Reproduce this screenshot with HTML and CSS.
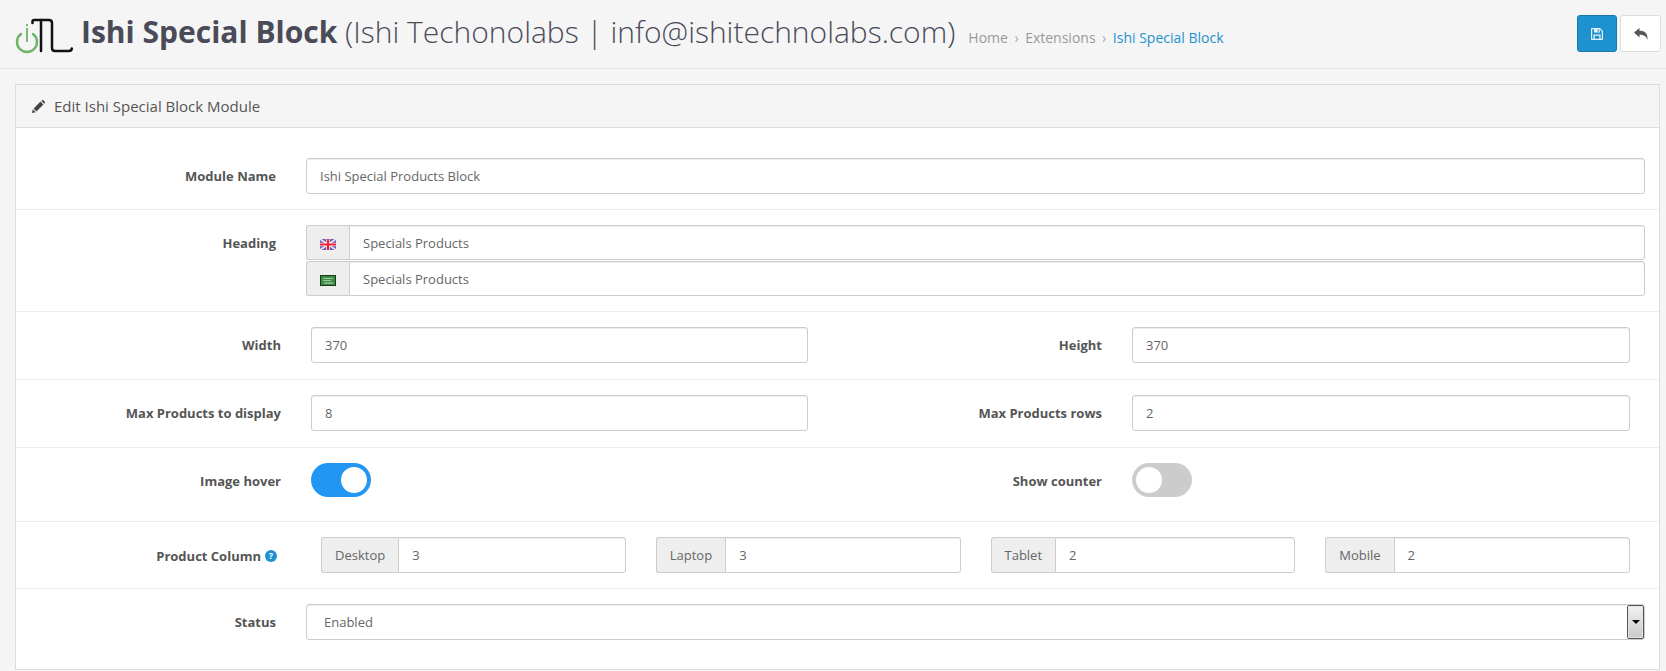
FILE: index.html
```html
<!DOCTYPE html>
<html lang="en">
<head>
<meta charset="utf-8">
<title>Ishi Special Block</title>
<link rel="stylesheet" href="styles.css">
</head>
<body>
<header class="page-header">
  <svg class="logo" width="58" height="38" viewBox="0 0 58 38" aria-hidden="true">
    <path d="M6 17 A10 10 0 1 0 18 17" fill="none" stroke="#6cb466" stroke-width="2.400" stroke-linecap="round"/>
    <rect x="11.100" y="7" width="1.800" height="2.200" fill="#6cb466"/>
    <rect x="11.100" y="11" width="1.800" height="14" fill="#6cb466"/>
    <path d="M17.500 6 V4.500 Q17.500 3 19 3 H34 Q37 3 37 6 V31 Q37 34 40 34 H54 Q56.500 34 56.800 31.500" fill="none" stroke="#111" stroke-width="2.500" stroke-linecap="round"/>
    <path d="M26 3 V34" fill="none" stroke="#111" stroke-width="2.500" stroke-linecap="round"/>
  </svg>
  <h1 class="title"><b>Ishi Special Block</b> <span class="title-light">(Ishi Techonolabs | info@ishitechnolabs.com)</span></h1>
  <ul class="breadcrumb">
    <li><a href="#">Home</a></li>
    <li class="sep">›</li>
    <li><a href="#">Extensions</a></li>
    <li class="sep">›</li>
    <li><a class="current" href="#">Ishi Special Block</a></li>
  </ul>
  <div class="actions">
    <button class="btn btn-primary" type="button" aria-label="Save">
      <svg width="12" height="12" viewBox="0 0 12 12"><path fill-rule="evenodd" d="M1 0H9L12 3V11a1 1 0 0 1-1 1H1a1 1 0 0 1-1-1V1a1 1 0 0 1 1-1ZM1.200 1.200V10.800H2.500V6.500H9.500V10.800H10.800V3.500L8.800 1.300V4.500H3V1.200ZM3.800 7.700V10.800H8.300V7.700ZM6.500 1.500V3.600H7.800V1.500Z" fill="#e6f3fb"/></svg>
    </button>
    <button class="btn btn-default" type="button" aria-label="Back">
      <svg width="14" height="12" viewBox="0 0 14 12"><path d="M0 4.500 5.500 0V2.700C10.500 2.700 14 4.800 13.400 12 12.500 8.300 10 6.700 5.500 6.700V9.500Z" fill="#555"/></svg>
    </button>
  </div>
</header>

<main class="panel">
  <div class="panel-heading">
    <svg width="13" height="13" viewBox="0 0 13 13" aria-hidden="true"><path d="M0 13 .8 9.300 3.700 12.200ZM1.600 8.500 8.500 1.600 11.400 4.500 4.500 11.400ZM9.300.8 10 .2a1 1 0 0 1 1.300 0L12.800 1.700a1 1 0 0 1 0 1.300L12.200 3.700Z" fill="#444"/></svg>
    <span>Edit Ishi Special Block Module</span>
  </div>
  <form class="panel-body">
    <div class="row row-full row-first">
      <label class="label">Module Name</label>
      <div class="field"><input class="input" type="text" value="Ishi Special Products Block"></div>
    </div>
    <div class="row row-full">
      <label class="label">Heading</label>
      <div class="field stack">
        <div class="group">
          <span class="addon addon-flag">
            <svg width="16" height="11" viewBox="0 0 16 11"><rect width="16" height="11" fill="#5f66c9"/><path d="M0 0 16 11M16 0 0 11" stroke="#f5dede" stroke-width="1.800"/><path d="M8 0V11M0 5.500H16" stroke="#fbe4e4" stroke-width="3.400"/><path d="M8 0V11M0 5.500H16" stroke="#f0233a" stroke-width="2"/></svg>
          </span>
          <input class="input input-grouped" type="text" value="Specials Products">
        </div>
        <div class="group">
          <span class="addon addon-flag">
            <svg width="16" height="11" viewBox="0 0 16 11"><rect width="16" height="11" fill="#123a18"/><rect x="1" y="1" width="14" height="9" fill="#3f8b45"/><path d="M3 3.500H13M3 5.500H11" stroke="#9cc79c" stroke-width="1"/><path d="M4 8H13" stroke="#d8ead8" stroke-width=".8"/></svg>
          </span>
          <input class="input input-grouped" type="text" value="Specials Products">
        </div>
      </div>
    </div>
    <div class="row row-half">
      <label class="label">Width</label>
      <div class="half"><input class="input" type="text" value="370"></div>
      <label class="label label-right">Height</label>
      <div class="half"><input class="input" type="text" value="370"></div>
    </div>
    <div class="row row-half">
      <label class="label">Max Products to display</label>
      <div class="half"><input class="input" type="text" value="8"></div>
      <label class="label label-right">Max Products rows</label>
      <div class="half"><input class="input" type="text" value="2"></div>
    </div>
    <div class="row row-half row-toggle">
      <label class="label">Image hover</label>
      <div class="half"><span class="switch switch-on"><span class="knob"></span></span></div>
      <label class="label label-right">Show counter</label>
      <div class="half"><span class="switch"><span class="knob"></span></span></div>
    </div>
    <div class="row row-columns">
      <label class="label label-help">Product Column <span class="help">?</span></label>
      <div class="columns">
        <div class="group"><span class="addon">Desktop</span><input class="input input-grouped" type="text" value="3"></div>
        <div class="group"><span class="addon">Laptop</span><input class="input input-grouped" type="text" value="3"></div>
        <div class="group"><span class="addon">Tablet</span><input class="input input-grouped" type="text" value="2"></div>
        <div class="group"><span class="addon">Mobile</span><input class="input input-grouped" type="text" value="2"></div>
      </div>
    </div>
    <div class="row row-full row-last">
      <label class="label">Status</label>
      <div class="field select-wrap">
        <select class="input select"><option>Enabled</option><option>Disabled</option></select>
        <span class="select-btn"><span class="select-arrow"></span></span>
      </div>
    </div>
  </form>
</main>
</body>
</html>
```
FILE: styles.css
```css
* { box-sizing: border-box; }
html, body { margin: 0; height: 100%; overflow: hidden; }
body {
  background: #f5f5f5;
  font-family: "Open Sans", sans-serif;
  font-size: 13px;
  color: #666;
}
.page-header {
  height: 69px;
  border-bottom: 1px solid #e6e6e6;
  display: flex;
  align-items: flex-start;
  padding: 0 5px 0 15px;
  position: relative;
}
.logo { margin-top: 17px; flex: none; }
.title {
  margin: 11px 0 0 8px;
  font-size: 30px;
  line-height: 42px;
  font-weight: 400;
  color: #4a4b58;
  white-space: nowrap;
}
.title b { font-weight: 700; }
.title-light { font-weight: 300; }
.breadcrumb {
  list-style: none;
  display: flex;
  margin: 29px 0 0 13px;
  padding: 0;
  font-size: 14px;
  line-height: 18px;
  white-space: nowrap;
}
.breadcrumb a { color: #999; text-decoration: none; }
.breadcrumb a.current { color: #1e91cf; }
.sep { color: #aaa; padding: 0 6.5px; }
.actions { margin-left: auto; margin-top: 15px; display: flex; gap: 3px; }
.btn {
  width: 40px;
  height: 37px;
  border-radius: 3px;
  padding: 0;
  display: flex;
  align-items: center;
  justify-content: center;
  border: 1px solid #ddd;
  background: #fff;
}
.btn-primary { background: #1e91cf; border-color: #1978ab; }
.btn-default { width: 41px; }
.panel {
  margin: 15px 6px 0 15px;
  border: 1px solid #ddd;
  height: 586px;
  background: #fff;
}
.panel-heading {
  height: 43px;
  background: #f5f5f5;
  border-bottom: 1px solid #ddd;
  display: flex;
  align-items: center;
  gap: 9px;
  padding-left: 16px;
  font-size: 15px;
  color: #555;
}
.panel-body { display: block; margin: 0; }
.row {
  display: flex;
  padding: 15px 0;
  border-bottom: 1px solid #eee;
}
.row-first { padding-top: 30px; }
.row-last { border-bottom: 0; }
.label {
  font-weight: 700;
  color: #555;
  text-align: right;
  line-height: 37px;
  flex: none;
  white-space: nowrap;
}
.row-full .label { width: 260px; margin-right: 30px; line-height: 18px; padding-top: 9px; }
.field { flex: 1; margin-right: 14px; }
.stack { display: flex; flex-direction: column; gap: 1px; }
.row-half .label { width: 265px; margin-right: 30px; }
.row-half .label-right { width: 294px; margin-right: 30px; }
.half { width: 497px; flex: none; }
.row-half .half:last-child { width: 498px; }
.input {
  display: block;
  width: 100%;
  height: 36px;
  border: 1px solid #ccc;
  border-radius: 3px;
  padding: 0 13px;
  background: #fff;
  font: 13px "Open Sans", sans-serif;
  color: #666;
  box-shadow: inset 0 1px 1px rgba(0,0,0,.075);
}
.group { display: flex; height: 35px; }
.group .input { height: 100%; }
.addon {
  flex: none;
  display: flex;
  align-items: center;
  padding: 0 13px;
  background: #eee;
  border: 1px solid #ccc;
  border-right: 0;
  border-radius: 3px 0 0 3px;
  color: #666;
}
.addon-flag { width: 43px; justify-content: center; padding: 4px 0 0; }
.input-grouped { flex: 1; min-width: 0; border-radius: 0 3px 3px 0; }
.row-toggle { height: 74px; align-items: flex-start; }
.switch {
  display: block;
  width: 60px;
  height: 34px;
  border-radius: 17px;
  background: #ccc;
  padding: 4px;
}
.switch-on { background: #2196f3; padding-left: 30px; }
.knob { display: block; width: 26px; height: 26px; border-radius: 50%; background: #fff; }
.label-help { width: 261px; margin-right: 44px; display: flex; justify-content: flex-end; align-items: center; gap: 4px; height: 36px; padding-top: 2px; }
.help {
  width: 12px;
  height: 12px;
  border-radius: 50%;
  background: #1e91cf;
  color: #fff;
  font-size: 9px;
  line-height: 12px;
  text-align: center;
}
.columns {
  width: 1309px;
  display: grid;
  grid-template-columns: repeat(4, 1fr);
  gap: 30px;
}
.columns .group { height: 36px; }
.select-wrap { position: relative; }
.select {
  appearance: none;
  padding-left: 17px;
}
.select-btn {
  position: absolute;
  top: 1px;
  right: 1px;
  width: 17px;
  height: 34px;
  border: 1px solid #555;
  outline: 1px solid #e4e4e4;
  outline-offset: -2px;
  border-radius: 2px;
  background: linear-gradient(#f2f2f2, #c8c8c8);
  display: flex;
  align-items: center;
  justify-content: center;
}
.select-arrow {
  width: 0;
  height: 0;
  border-left: 4px solid transparent;
  border-right: 4px solid transparent;
  border-top: 4px solid #000;
}
```
